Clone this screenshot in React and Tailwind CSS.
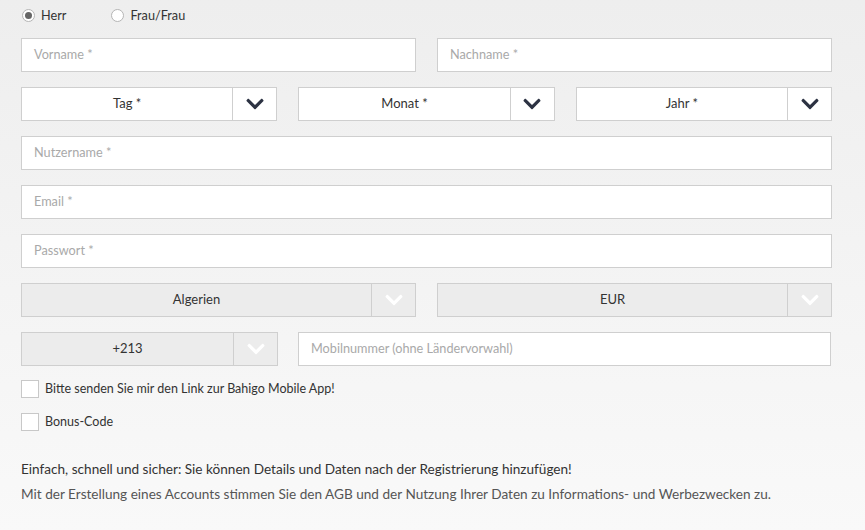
import React from 'react';
import { FaChevronDown } from 'react-icons/fa';

const font = { fontFamily: 'Lato, "Liberation Sans", sans-serif' };

function TextField({ placeholder, className = '' }) {
  return (
    <div className={`h-[34px] bg-white border border-[#cfcfcf] flex items-center px-3 ${className}`}>
      <span className="text-[12.7px] text-[#a9a9a9]">{placeholder}</span>
    </div>
  );
}

function SelectBox({ label, gray = false, className = '' }) {
  return (
    <div
      className={`h-[34px] border border-[#cfcfcf] flex ${gray ? 'bg-[#ececec]' : 'bg-white'} ${className}`}
    >
      <div className="flex-1 flex items-center justify-center text-[13px] text-[#333]">{label}</div>
      <div className="w-[44px] border-l border-[#cfcfcf] flex items-center justify-center">
        <FaChevronDown className={`w-[20px] h-[20px] ${gray ? 'text-white' : 'text-[#2c3242]'}`} />
      </div>
    </div>
  );
}

function Radio({ checked, label }) {
  return (
    <label className="flex items-center gap-[6px]">
      <span className="w-[13px] h-[13px] rounded-full border border-[#b5b5b5] bg-white flex items-center justify-center">
        {checked && <span className="w-[7px] h-[7px] rounded-full bg-[#666]" />}
      </span>
      <span className="text-[12.7px] text-[#333]">{label}</span>
    </label>
  );
}

function Checkbox({ label }) {
  return (
    <div className="flex items-center gap-[6px] h-[18px]">
      <span className="w-[18px] h-[18px] bg-white border border-[#c8c8c8]" />
      <span className="text-[12.5px] text-[#333]">{label}</span>
    </div>
  );
}

export default function App() {
  return (
    <div
      className="w-[865px] h-[530px] bg-gradient-to-b from-[#eeeeee] to-[#f9f9f9] px-[21px] pt-[8px] overflow-hidden"
      style={font}
    >
      {/* Anrede */}
      <div className="flex items-center gap-[45px] pl-[1px] h-[15px]">
        <Radio checked label="Herr" />
        <Radio label="Frau/Frau" />
      </div>

      {/* Name */}
      <div className="grid grid-cols-2 gap-[21px] mt-[15px] w-[811px]">
        <TextField placeholder="Vorname *" />
        <TextField placeholder="Nachname *" />
      </div>

      {/* Geburtsdatum */}
      <div className="grid grid-cols-3 gap-[21px] mt-[15px] w-[811px]">
        <SelectBox label="Tag *" />
        <SelectBox label="Monat *" />
        <SelectBox label="Jahr *" />
      </div>

      <div className="w-[811px] flex flex-col gap-[15px] mt-[15px]">
        <TextField placeholder="Nutzername *" />
        <TextField placeholder="Email *" />
        <TextField placeholder="Passwort *" />
        <div className="grid grid-cols-2 gap-[21px]">
          <SelectBox label="Algerien" gray />
          <SelectBox label="EUR" gray />
        </div>
        <div className="flex gap-[20px]">
          <SelectBox label="+213" gray className="w-[257px]" />
          <TextField placeholder="Mobilnummer (ohne Ländervorwahl)" className="flex-1 mr-[1px]" />
        </div>
      </div>

      {/* Optionen */}
      <div className="flex flex-col gap-[15px] mt-[14px]">
        <Checkbox label="Bitte senden Sie mir den Link zur Bahigo Mobile App!" />
        <Checkbox label="Bonus-Code" />
      </div>

      <div className="mt-[26px] text-[13.6px] text-[#333] leading-[25px]">
        <p>Einfach, schnell und sicher: Sie können Details und Daten nach der Registrierung hinzufügen!</p>
        <p className="text-[#555]">
          Mit der Erstellung eines Accounts stimmen Sie den AGB und der Nutzung Ihrer Daten zu Informations- und Werbezwecken zu.
        </p>
      </div>
    </div>
  );
}
